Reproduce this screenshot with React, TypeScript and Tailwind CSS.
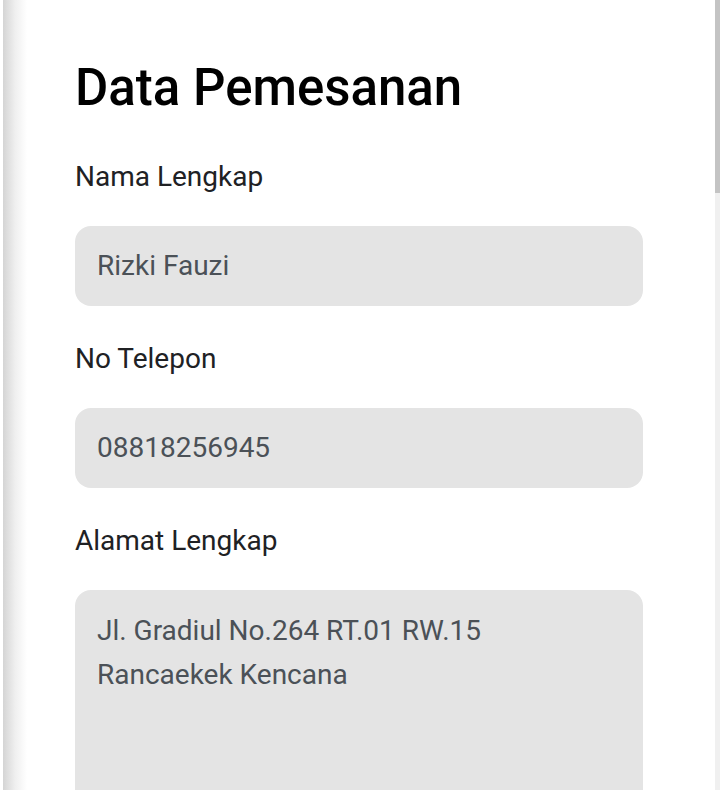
import React from "react";

const font = { fontFamily: 'Roboto, "Noto Sans", sans-serif' };

function Label({ children }: { children: React.ReactNode }) {
  return (
    <div className="text-[28px] leading-[36px] text-[#202124]" style={font}>
      {children}
    </div>
  );
}

function Field({ value }: { value: string }) {
  return (
    <div className="mt-[31px] h-[80px] rounded-[16px] bg-[#e4e4e4] px-[22px] flex items-center text-[28px] text-[#4b5157]" style={font}>
      {value}
    </div>
  );
}

export default function App() {
  return (
    <div className="flex h-[790px] w-[720px] overflow-hidden bg-white">
      <div className="w-[3px] bg-white" />
      <div className="w-[24px] bg-gradient-to-r from-[#d4d4d4] via-[#efefef] to-white" />
      <div className="flex-1 pl-[48px] pr-[72px] pt-[58px]">
        <h1 className="text-[51px] leading-[60px] font-medium text-black" style={font}>
          Data Pemesanan
        </h1>
        <div className="mt-[41px]">
          <Label>Nama Lengkap</Label>
          <Field value="Rizki Fauzi" />
        </div>
        <div className="mt-[35px]">
          <Label>No Telepon</Label>
          <Field value="08818256945" />
        </div>
        <div className="mt-[35px]">
          <Label>Alamat Lengkap</Label>
          <div className="mt-[31px] h-[260px] rounded-[16px] bg-[#e4e4e4] px-[22px] pt-[19px] text-[28px] leading-[44px] text-[#4b5157]" style={font}>
            <div>Jl. Gradiul No.264 RT.01 RW.15</div>
            <div>Rancaekek Kencana</div>
          </div>
        </div>
      </div>
      <div className="flex w-[5px] flex-col bg-[#f0f0f0]">
        <div className="h-[193px] bg-[#c4c4c4]" />
      </div>
    </div>
  );
}
